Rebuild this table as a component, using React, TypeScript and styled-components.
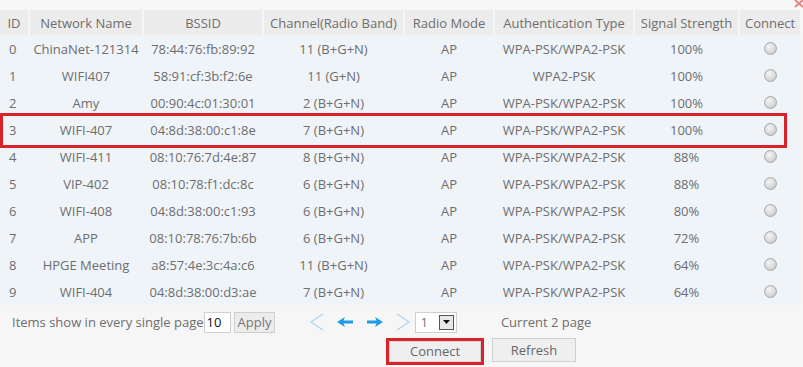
import styled, { createGlobalStyle } from 'styled-components';

const GlobalStyle = createGlobalStyle`
    html, body {
        margin: 0;
        padding: 0;
        background: #f6f6f6;
    }
    body {
        font-family: "Open Sans", "Noto Sans", sans-serif;
        font-size: 13px;
        color: #6e6e6e;
    }
`;

const Page = styled.div`
    position: relative;
    width: 803px;
    height: 367px;
    padding-top: 10px;
    box-sizing: border-box;
    overflow: hidden;
`;

const CloseMark = styled.svg`
    position: absolute;
    top: -2px;
    right: -2px;
`;

const cols = '28px 112px 118px 139px 88px 138px 103px 60px';

const HeadRow = styled.div`
    display: grid;
    grid-template-columns: ${cols};
    column-gap: 2px;
    height: 25px;
`;

const HeadCell = styled.div`
    background: #ececec;
    display: flex;
    align-items: center;
    justify-content: center;
    white-space: nowrap;
`;

const Body = styled.div`
    background: #eff4f9;
    width: 801px;
`;

const Row = styled.div<{ $picked?: boolean }>`
    position: relative;
    display: grid;
    grid-template-columns: ${cols};
    column-gap: 2px;
    height: 27px;
    ${p => p.$picked && `
        &::after {
            content: '';
            position: absolute;
            left: 0;
            right: 14px;
            top: -3px;
            bottom: -5px;
            border: 3px solid #d9222a;
            pointer-events: none;
        }
    `}
`;

const Cell = styled.div<{ $left?: boolean }>`
    display: flex;
    align-items: center;
    justify-content: ${p => (p.$left ? 'flex-start' : 'center')};
    padding-left: ${p => (p.$left ? '9px' : '0')};
    white-space: nowrap;
`;

const Radio = styled.span`
    width: 13px;
    height: 13px;
    border-radius: 50%;
    border: 1px solid #a8a8a8;
    background: radial-gradient(circle at 40% 35%, #f6f6f6 0%, #d6d6d6 60%, #bdbdbd 100%);
    box-sizing: border-box;
`;

const Footer = styled.div`
    display: flex;
    align-items: center;
    height: 26px;
    margin-top: 4px;
    padding-left: 12px;
`;

const PageSize = styled.input`
    width: 27px;
    height: 21px;
    box-sizing: border-box;
    border: 1px solid #cfcfcf;
    background: #fff;
    font: inherit;
    color: #111;
    padding: 0 2px;
    margin-left: 0;
`;

const SmallBtn = styled.button`
    height: 21px;
    margin-left: 3px;
    padding: 0 3px;
    border: 1px solid #cfcfcf;
    background: #ececec;
    font: inherit;
    color: #777;
`;

const Pager = styled.div`
    display: flex;
    align-items: center;
    gap: 12px;
    margin-left: 34px;
`;

const PageSelect = styled.div`
    display: flex;
    align-items: center;
    height: 19px;
    border: 1px solid #cfcfcf;
    background: #fff;
    margin-left: -8px;
    padding-left: 4px;
    color: #777;
`;

const SelectBtn = styled.span`
    width: 13px;
    height: 13px;
    margin: 0 2px 0 11px;
    border: 1px solid #555;
    background: #e8e8e8;
    display: flex;
    align-items: center;
    justify-content: center;
`;

const Current = styled.span`
    margin-left: 44px;
`;

const Actions = styled.div`
    display: flex;
    gap: 8px;
    padding-left: 386px;
    margin-top: 3px;
`;

const ActionBtn = styled.button<{ $marked?: boolean }>`
    height: 24px;
    box-sizing: border-box;
    width: ${p => (p.$marked ? '98px' : '84px')};
    border: 1px solid #cfcfcf;
    background: #efefef;
    font: inherit;
    color: #666;
    ${p => p.$marked && `
        border: 3px solid #d9222a;
        box-shadow: inset 0 0 0 1px #d6d6d6;
        height: 27px;
        padding-bottom: 3px;
    `}
`;

interface INetwork {
    name: string;
    bssid: string;
    channel: string;
    auth: string;
    signal: string;
}

const networks: INetwork[] = [
    { name: 'ChinaNet-121314', bssid: '78:44:76:fb:89:92', channel: '11 (B+G+N)', auth: 'WPA-PSK/WPA2-PSK', signal: '100%' },
    { name: 'WIFI407', bssid: '58:91:cf:3b:f2:6e', channel: '11 (G+N)', auth: 'WPA2-PSK', signal: '100%' },
    { name: 'Amy', bssid: '00:90:4c:01:30:01', channel: '2 (B+G+N)', auth: 'WPA-PSK/WPA2-PSK', signal: '100%' },
    { name: 'WIFI-407', bssid: '04:8d:38:00:c1:8e', channel: '7 (B+G+N)', auth: 'WPA-PSK/WPA2-PSK', signal: '100%' },
    { name: 'WIFI-411', bssid: '08:10:76:7d:4e:87', channel: '8 (B+G+N)', auth: 'WPA-PSK/WPA2-PSK', signal: '88%' },
    { name: 'VIP-402', bssid: '08:10:78:f1:dc:8c', channel: '6 (B+G+N)', auth: 'WPA-PSK/WPA2-PSK', signal: '88%' },
    { name: 'WIFI-408', bssid: '04:8d:38:00:c1:93', channel: '6 (B+G+N)', auth: 'WPA-PSK/WPA2-PSK', signal: '80%' },
    { name: 'APP', bssid: '08:10:78:76:7b:6b', channel: '6 (B+G+N)', auth: 'WPA-PSK/WPA2-PSK', signal: '72%' },
    { name: 'HPGE Meeting', bssid: 'a8:57:4e:3c:4a:c6', channel: '11 (B+G+N)', auth: 'WPA-PSK/WPA2-PSK', signal: '64%' },
    { name: 'WIFI-404', bssid: '04:8d:38:00:d3:ae', channel: '7 (B+G+N)', auth: 'WPA-PSK/WPA2-PSK', signal: '64%' },
];

const headers = ['ID', 'Network Name', 'BSSID', 'Channel(Radio Band)', 'Radio Mode', 'Authentication Type', 'Signal Strength', 'Connect'];

function Chevron({ dir }: { dir: 'left' | 'right' }) {
    return (
        <svg width="16" height="18" viewBox="0 0 16 18">
            <path
                d={dir === 'left' ? 'M14 1 L2 9 L14 17' : 'M2 1 L14 9 L2 17'}
                fill="none"
                stroke="#a9d4f2"
                strokeWidth="1.3"
            />
        </svg>
    );
}

function BlueArrow({ dir }: { dir: 'left' | 'right' }) {
    return (
        <svg width="17" height="10" viewBox="0 0 17 10" style={{ transform: dir === 'right' ? 'scaleX(-1)' : undefined }}>
            <path d="M0 5 L8 0 L6.5 3.5 L16 3.5 L16 6.5 L6.5 6.5 L8 10 Z" fill="#1e9be6" />
        </svg>
    );
}

function App() {
    return (
        <Page>
            <GlobalStyle />
            <CloseMark width="12" height="10" viewBox="0 0 12 10">
                <path d="M2 2 L10 9 M10 2 L2 9" stroke="#e8877f" strokeWidth="2" />
            </CloseMark>
            <HeadRow>
                {headers.map(h => (
                    <HeadCell key={h}>{h}</HeadCell>
                ))}
            </HeadRow>
            <Body>
                {networks.map((n, i) => (
                    <Row key={n.bssid} $picked={i === 3}>
                        <Cell $left>{i}</Cell>
                        <Cell>{n.name}</Cell>
                        <Cell>{n.bssid}</Cell>
                        <Cell>{n.channel}</Cell>
                        <Cell>AP</Cell>
                        <Cell>{n.auth}</Cell>
                        <Cell>{n.signal}</Cell>
                        <Cell><Radio /></Cell>
                    </Row>
                ))}
            </Body>
            <Footer>
                Items show in every single page
                <PageSize defaultValue="10" />
                <SmallBtn>Apply</SmallBtn>
                <Pager>
                    <Chevron dir="left" />
                    <BlueArrow dir="left" />
                    <BlueArrow dir="right" />
                    <Chevron dir="right" />
                    <PageSelect>
                        1
                        <SelectBtn>
                            <svg width="7" height="4" viewBox="0 0 7 4">
                                <path d="M0 0 L7 0 L3.5 4 Z" fill="#111" />
                            </svg>
                        </SelectBtn>
                    </PageSelect>
                </Pager>
                <Current>Current 2 page</Current>
            </Footer>
            <Actions>
                <ActionBtn $marked>Connect</ActionBtn>
                <ActionBtn>Refresh</ActionBtn>
            </Actions>
        </Page>
    );
}

export default App;
